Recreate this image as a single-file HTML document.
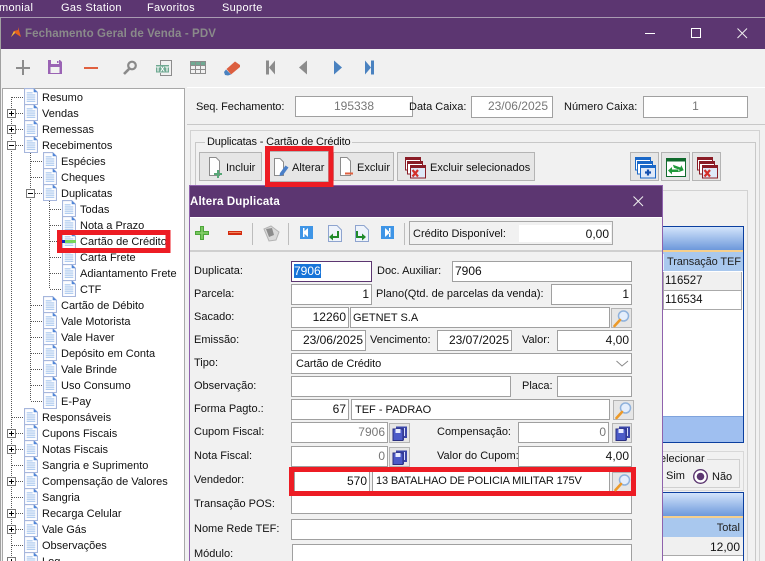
<!DOCTYPE html>
<html><head><meta charset="utf-8"><title>Fechamento Geral de Venda</title>
<style>
html,body{margin:0;padding:0;width:765px;height:561px;overflow:hidden;background:#f1f1f1}
body{position:relative;font-family:"Liberation Sans",sans-serif;font-size:11px;color:#111}
.a{position:absolute;box-sizing:border-box}
.t{position:absolute;white-space:nowrap;line-height:14px;height:14px;margin-top:1px}
.f{position:absolute;box-sizing:border-box;background:#fff;border:1px solid #a0a0a0;white-space:nowrap;line-height:20px;padding:0 4px;overflow:hidden;font-size:11px}
.n{font-size:12px;line-height:18px}
.r{text-align:right}.g{color:#777}
.b{position:absolute;box-sizing:border-box;background:#e6e6e6;border:1px solid #b4b4b4}
.w{color:#fff}
svg{position:absolute;left:0;top:0;overflow:hidden}
</style></head><body>

<!-- frame backgrounds -->
<div class="a" style="left:0;top:0;width:765px;height:17px;background:#5c3671"></div>
<div class="a" style="left:0;top:17px;width:765px;height:1px;background:#a99bb2"></div>
<div class="a" style="left:0;top:18px;width:765px;height:31px;background:#5c3671"></div>
<div class="a" style="left:0;top:18px;width:1px;height:543px;background:#a0a0a0"></div>
<div class="t w" style="left:-1px;top:0;letter-spacing:.3px">monial</div>
<div class="t w" style="left:61px;top:0;letter-spacing:.3px">Gas Station</div>
<div class="t w" style="left:147px;top:0;letter-spacing:.3px">Favoritos</div>
<div class="t w" style="left:222px;top:0;letter-spacing:.3px">Suporte</div>
<div class="t" style="left:25px;top:26px;font-weight:bold;color:#8a8a8a;font-size:11.5px;letter-spacing:.1px">Fechamento Geral de Venda - PDV</div>

<!-- tree panel -->
<div class="a" style="left:2px;top:88px;width:183px;height:473px;background:#fff;border:1px solid #a8a8a8;border-bottom:0"></div>

<!-- right top panel -->
<div class="a" style="left:187px;top:87px;width:578px;height:38px;background:#f1f1f1;border-top:1px solid #fff;border-bottom:1px solid #c8c8c8"></div>
<div class="t" style="left:196px;top:99px;letter-spacing:-.1px">Seq. Fechamento:</div>
<div class="f g n" style="left:295px;top:96px;width:118px;height:21px;text-align:center">195338</div>
<div class="t" style="left:409px;top:99px">Data Caixa:</div>
<div class="f g r n" style="left:471px;top:96px;width:82px;height:22px">23/06/2025</div>
<div class="t" style="left:564px;top:99px">Número Caixa:</div>
<div class="f g n" style="left:643px;top:96px;width:105px;height:22px;text-align:center">1</div>

<!-- frames -->
<div class="a" style="left:190px;top:130px;width:570px;height:431px;border:1px solid #d2d2d2;border-bottom:0"></div>
<div class="a" style="left:195px;top:142px;width:561px;height:419px;border:1px solid #c8c8c8;border-bottom:0"></div>
<div class="a" style="left:198px;top:190px;width:550px;height:371px;border:1px solid #d2d2d2;border-bottom:0"></div>
<div class="t" style="left:205px;top:134px;background:#f1f1f1;padding:0 2px;letter-spacing:-.15px">Duplicatas - Cartão de Crédito</div>

<!-- buttons -->
<div class="b" style="left:199px;top:152px;width:63px;height:29px"></div>
<div class="b" style="left:269px;top:151px;width:60px;height:31px"></div>
<div class="b" style="left:333px;top:152px;width:61px;height:29px"></div>
<div class="b" style="left:397px;top:152px;width:138px;height:29px"></div>
<div class="b" style="left:630px;top:152px;width:29px;height:29px"></div>
<div class="b" style="left:661px;top:152px;width:29px;height:29px"></div>
<div class="b" style="left:692px;top:152px;width:29px;height:29px"></div>
<div class="t" style="left:226px;top:160px">Incluir</div>
<div class="t" style="left:292px;top:160px">Alterar</div>
<div class="t" style="left:357px;top:160px">Excluir</div>
<div class="t" style="left:430px;top:160px">Excluir selecionados</div>

<!-- background grid 1 -->
<div class="a" style="left:655px;top:226px;width:89px;height:24px;background:linear-gradient(#d3e4fb,#6d98db);border-top:1px solid #0b3f9f"></div>
<div class="a" style="left:655px;top:250px;width:89px;height:2px;background:#f6cf8c"></div>
<div class="a" style="left:655px;top:252px;width:89px;height:165px;background:#fff"></div>
<div class="a" style="left:655px;top:252px;width:89px;height:19px;background:#a9c8ee"></div>
<div class="a" style="left:663px;top:254px;width:1px;height:16px;background:#e8f0fb"></div>
<div class="t" style="left:667px;top:254px;color:#222;letter-spacing:-.1px">Transação TEF</div>
<div class="a" style="left:655px;top:272px;width:87px;height:19px;background:#f0f0f0;border-bottom:1px solid #aaa;border-right:1px solid #aaa"></div>
<div class="a" style="left:655px;top:291px;width:87px;height:19px;background:#fff;border-bottom:1px solid #aaa;border-right:1px solid #aaa"></div>
<div class="a" style="left:663px;top:272px;width:1px;height:38px;background:#aaa"></div>
<div class="t" style="left:665px;top:273px;font-size:11.500px">116527</div>
<div class="t" style="left:665px;top:292px;font-size:11.500px">116534</div>
<div class="a" style="left:655px;top:416px;width:89px;height:27px;background:#9fbff0;border-top:1px solid #7fa3dc;border-bottom:1px solid #0b3f9f"></div>
<div class="a" style="left:743px;top:226px;width:1px;height:217px;background:#0b3f9f"></div>
<!-- selecionar -->
<div class="a" style="left:650px;top:451px;width:94px;height:40px;border:1px solid #d8d8d8"></div>
<div class="a" style="left:650px;top:459px;width:90px;height:29px;border:1px solid #d0d0d0"></div>
<div class="t" style="left:660px;top:451px;background:#f1f1f1;padding-right:2px">elecionar</div>
<div class="t" style="left:666px;top:468px">Sim</div>
<div class="t" style="left:712px;top:469px">Não</div>
<!-- background grid 2 -->
<div class="a" style="left:655px;top:492px;width:89px;height:24px;background:linear-gradient(#d3e4fb,#6d98db);border-top:1px solid #0b3f9f"></div>
<div class="a" style="left:655px;top:516px;width:89px;height:2px;background:#f6cf8c"></div>
<div class="a" style="left:655px;top:518px;width:88px;height:19px;background:#a9c8ee"></div>
<div class="t r" style="right:25px;top:520px;color:#222">Total</div>
<div class="a" style="left:655px;top:537px;width:88px;height:19px;background:#f0f0f0;border-bottom:1px solid #aaa"></div>
<div class="a" style="left:655px;top:556px;width:88px;height:5px;background:#fff"></div>
<div class="t r" style="right:25px;top:539px;font-size:12px">12,00</div>
<div class="a" style="left:743px;top:492px;width:1px;height:69px;background:#0b3f9f"></div>

<!-- dialog -->
<div class="a" style="left:189px;top:185px;width:474px;height:376px;background:#f1f1f1;border:1px solid #8f62ad;border-bottom:0"></div>
<div class="a" style="left:190px;top:186px;width:472px;height:31px;background:#5c3671"></div>
<div class="t w" style="left:190px;top:194px;font-weight:bold;font-size:11.500px;letter-spacing:.15px">Altera Duplicata</div>
<div class="a" style="left:190px;top:217px;width:472px;height:1px;background:#fff"></div>
<div class="a" style="left:190px;top:250px;width:472px;height:2px;background:#cfcfcf"></div>
<div class="a" style="left:409px;top:221px;width:204px;height:24px;background:#f1f1f1;border:1px solid #a8a8a8"></div>
<div class="a" style="left:519px;top:225px;width:92px;height:17px;background:#fff"></div>
<div class="t" style="left:413px;top:226px">Crédito Disponível:</div>
<div class="t" style="right:156px;top:226px;font-size:12px">0,00</div>

<div class="t" style="left:194px;top:263px">Duplicata:</div>
<div class="f n" style="left:291px;top:261px;width:81px;height:21px;border-color:#5c3671;padding:0 2px"><span style="background:#1874d8;color:#fff;display:inline-block;line-height:14px;margin-top:2px">7906</span></div>
<div class="t" style="left:377px;top:263px">Doc. Auxiliar:</div>
<div class="f n" style="left:452px;top:261px;width:180px;height:21px;padding-left:2px">7906</div>

<div class="t" style="left:194px;top:286px">Parcela:</div>
<div class="f r n" style="left:291px;top:284px;width:81px;height:21px;padding-right:2px">1</div>
<div class="t" style="left:376px;top:286px">Plano(Qtd. de parcelas da venda):</div>
<div class="f r n" style="left:551px;top:284px;width:81px;height:21px;padding-right:2px">1</div>

<div class="t" style="left:194px;top:309px">Sacado:</div>
<div class="f r n" style="left:291px;top:307px;width:58px;height:21px;padding-right:2px">12260</div>
<div class="f" style="left:350px;top:307px;width:260px;height:21px;padding-left:2px">GETNET S.A</div>
<div class="b" style="left:611px;top:308px;width:21px;height:20px"></div>

<div class="t" style="left:194px;top:332px">Emissão:</div>
<div class="f r n" style="left:291px;top:330px;width:75px;height:21px;padding:0 2px">23/06/2025</div>
<div class="t" style="left:370px;top:332px">Vencimento:</div>
<div class="f r n" style="left:437px;top:330px;width:75px;height:21px;padding:0 2px">23/07/2025</div>
<div class="t" style="left:522px;top:332px">Valor:</div>
<div class="f r n" style="left:557px;top:330px;width:75px;height:21px;padding:0 2px">4,00</div>

<div class="t" style="left:194px;top:355px">Tipo:</div>
<div class="f" style="left:291px;top:353px;width:341px;height:21px;letter-spacing:-.1px">Cartão de Crédito</div>

<div class="t" style="left:194px;top:378px">Observação:</div>
<div class="f" style="left:291px;top:376px;width:220px;height:21px"></div>
<div class="t" style="left:522px;top:378px">Placa:</div>
<div class="f" style="left:557px;top:376px;width:75px;height:21px"></div>

<div class="t" style="left:194px;top:401px">Forma Pagto.:</div>
<div class="f r n" style="left:291px;top:399px;width:58px;height:21px;padding-right:2px">67</div>
<div class="f" style="left:351px;top:399px;width:259px;height:21px;padding-left:3px">TEF - PADRAO</div>
<div class="b" style="left:613px;top:400px;width:21px;height:20px"></div>

<div class="t" style="left:194px;top:424px">Cupom Fiscal:</div>
<div class="f r g n" style="left:291px;top:422px;width:97px;height:21px;padding:0 2px">7906</div>
<div class="b" style="left:389px;top:423px;width:21px;height:20px"></div>
<div class="t" style="left:437px;top:424px">Compensação:</div>
<div class="f r g n" style="left:518px;top:422px;width:91px;height:21px;padding:0 2px">0</div>
<div class="b" style="left:612px;top:423px;width:20px;height:20px"></div>

<div class="t" style="left:194px;top:448px">Nota Fiscal:</div>
<div class="f r g n" style="left:291px;top:446px;width:97px;height:21px;padding:0 2px">0</div>
<div class="b" style="left:389px;top:447px;width:21px;height:20px"></div>
<div class="t" style="left:437px;top:448px">Valor do Cupom:</div>
<div class="f r n" style="left:518px;top:446px;width:114px;height:21px;padding:0 2px">4,00</div>

<div class="t" style="left:194px;top:472px">Vendedor:</div>
<div class="f r n" style="left:294px;top:471px;width:76px;height:21px;padding:0 2px">570</div>
<div class="f" style="left:372px;top:471px;width:238px;height:21px;padding-left:3px;letter-spacing:-.15px;line-height:18px">13 BATALHAO DE POLICIA MILITAR 175V</div>
<div class="b" style="left:612px;top:472px;width:20px;height:20px"></div>

<div class="t" style="left:194px;top:496px">Transação POS:</div>
<div class="f" style="left:291px;top:495px;width:341px;height:19px"></div>
<div class="t" style="left:194px;top:521px">Nome Rede TEF:</div>
<div class="f" style="left:291px;top:519px;width:341px;height:21px"></div>
<div class="t" style="left:194px;top:546px">Módulo:</div>
<div class="f" style="left:292px;top:544px;width:340px;height:21px"></div>

<!-- tree text -->
<div class="a" style="left:79px;top:233px;width:86px;height:16px;background:#fff"></div>
<div class="t" style="left:42px;top:90px">Resumo</div>
<div class="t" style="left:42px;top:106px">Vendas</div>
<div class="t" style="left:42px;top:122px">Remessas</div>
<div class="t" style="left:42px;top:138px">Recebimentos</div>
<div class="t" style="left:61px;top:154px">Espécies</div>
<div class="t" style="left:61px;top:170px">Cheques</div>
<div class="t" style="left:61px;top:186px">Duplicatas</div>
<div class="t" style="left:80px;top:202px">Todas</div>
<div class="t" style="left:80px;top:218px">Nota a Prazo</div>
<div class="t" style="left:80px;top:234px">Cartão de Crédito</div>
<div class="t" style="left:80px;top:250px">Carta Frete</div>
<div class="t" style="left:80px;top:266px">Adiantamento Frete</div>
<div class="t" style="left:80px;top:282px">CTF</div>
<div class="t" style="left:61px;top:298px">Cartão de Débito</div>
<div class="t" style="left:61px;top:314px">Vale Motorista</div>
<div class="t" style="left:61px;top:330px">Vale Haver</div>
<div class="t" style="left:61px;top:346px">Depósito em Conta</div>
<div class="t" style="left:61px;top:362px">Vale Brinde</div>
<div class="t" style="left:61px;top:378px">Uso Consumo</div>
<div class="t" style="left:61px;top:394px">E-Pay</div>
<div class="t" style="left:42px;top:410px">Responsáveis</div>
<div class="t" style="left:42px;top:426px">Cupons Fiscais</div>
<div class="t" style="left:42px;top:442px">Notas Fiscais</div>
<div class="t" style="left:42px;top:458px">Sangria e Suprimento</div>
<div class="t" style="left:42px;top:474px">Compensação de Valores</div>
<div class="t" style="left:42px;top:490px">Sangria</div>
<div class="t" style="left:42px;top:506px">Recarga Celular</div>
<div class="t" style="left:42px;top:522px">Vale Gás</div>
<div class="t" style="left:42px;top:538px">Observações</div>
<div class="t" style="left:42px;top:554px">Log</div>

<!-- vector overlay -->
<svg width="765" height="561" viewBox="0 0 765 561" xmlns="http://www.w3.org/2000/svg">
<defs>
<symbol id="d" viewBox="0 0 13 16" width="14" height="17" preserveAspectRatio="none">
<path d="M.5.5H9L12.500 4V15.500H.5Z" fill="#fdfdff" stroke="#a6b6dc"/>
<path d="M9 .5V4H12.500Z" fill="#4f86d8"/>
<path d="M2.500 4.500H8M2.500 6.500H10.500M2.500 8.500H10.500M2.500 10.500H10.500M2.500 12.500H10.500" stroke="#a6c6ee" fill="none"/>
</symbol>
<symbol id="s" viewBox="0 0 21 20" width="21" height="20">
<circle cx="12.500" cy="8" r="5" fill="#e4eefc" stroke="#8fb2dc" stroke-width="1.500"/>
<path d="M9 12L3.500 18" stroke="#ec9a2a" stroke-width="2.600" stroke-linecap="round"/>
</symbol>
<symbol id="v" viewBox="0 0 21 20" width="21" height="20">
<path d="M7 3.500H18V15H15V17H7Z" fill="#3a46a8"/>
<path d="M4 6H14V17.500H4Z" fill="#4c5bc8" stroke="#2a2f80"/>
<path d="M6.500 6H11.500V10H6.500Z" fill="#e8ecff"/>
<path d="M15.500 5V13" stroke="#d6dcff"/>
</symbol>
<symbol id="rx" viewBox="0 0 22 24" width="22" height="24">
<path d="M.5.5H15.500V13H.5Z" fill="#fff" stroke="#8a1c26"/><path d="M.5.5H15.500V3H.5Z" fill="#8a1c26"/>
<path d="M2.500 4.500H17.500V17H2.500Z" fill="#fff" stroke="#8a1c26"/><path d="M2.500 4.500H17.500V7H2.500Z" fill="#8a1c26"/>
<path d="M5.500 8.500H20.500V21H5.500Z" fill="#dfe9f8" stroke="#8a1c26"/><path d="M5.500 8.500H20.500V11H5.500Z" fill="#8a1c26"/>
<path d="M7.500 13L13 19.500M13 13L7.500 19.500" stroke="#d4302a" stroke-width="2.200"/>
</symbol>
</defs>

<!-- logo -->
<path d="M18 27L21 37L15 33L11 37L14 31L18 30Z" fill="#e8641e"/><path d="M15 33L11 37L14 31Z" fill="#f2c040"/>
<!-- window controls -->
<path d="M645 33.500H655" stroke="#fff"/><rect x="691.500" y="28.500" width="9" height="9" fill="none" stroke="#fff"/>
<path d="M737.500 28.500L747 38M747 28.500L737.500 38" stroke="#eee" fill="none"/>
<!-- main toolbar -->
<path d="M23 60V75M16 68H30" stroke="#8c8c8c" stroke-width="2" fill="none"/>
<path d="M48 60H60L62 62V74H48Z" fill="#9a63b4"/><rect x="51" y="60" width="8" height="4" fill="#f1f1f1"/><rect x="57" y="61" width="1.500" height="2" fill="#9a63b4"/><rect x="50.500" y="67" width="9" height="6" fill="#f1f1f1"/>
<path d="M84 68H98" stroke="#e0603f" stroke-width="2"/>
<circle cx="132" cy="65.500" r="3.800" fill="none" stroke="#8a8a8a" stroke-width="2.200"/><path d="M129 69L124 74" stroke="#8a8a8a" stroke-width="2.600"/>
<path d="M160.500 65V60.500H171.500V75.500H160.500V73" fill="none" stroke="#8c8c8c"/><rect x="156" y="65" width="13" height="7.500" fill="#6fa992"/>
<text x="162.500" y="71.500" font-family="Liberation Mono" font-size="7.500" font-weight="bold" fill="#fff" text-anchor="middle">TXT</text>
<rect x="190.500" y="61.500" width="15" height="12" fill="none" stroke="#8c8c8c"/><rect x="191" y="62" width="14" height="3.500" fill="#6fa992"/><path d="M195.500 62V73M200.500 62V73M191 65.500H205M191 69.500H205" stroke="#8c8c8c" fill="none"/>
<path d="M226.500 69L235 61.500L240 65V67L231 74.500Z" fill="#dc5f40"/><path d="M224 72L226 69.500L231 74.500L228 75.500L225 75Z" fill="#4a82c0"/>
<path d="M266 60.500H269V74.500H266Z M275 60.500V74.500L269 67.500Z" fill="#8c8c8c"/>
<path d="M307 60.500V74.500L299 67.500Z" fill="#8c8c8c"/>
<path d="M334 60.500V74.500L342 67.500Z" fill="#4a82c0"/>
<path d="M365 60.500V74.500L371 67.500Z M371 60.500H374V74.500H371Z" fill="#4a82c0"/>

<!-- tree dotted lines -->
<g stroke="#555" stroke-dasharray="1 1" fill="none">
<path d="M11.500 97V561M30.500 145V401M49.500 193V289"/>
<path d="M12 97.500H25M16 113.500H25M16 129.500H25M16 145.500H25M31 161.500H44M31 177.500H44M35 193.500H44M50 209.500H63M50 225.500H63M50 241.500H63M50 257.500H63M50 273.500H63M50 289.500H63M31 305.500H44M31 321.500H44M31 337.500H44M31 353.500H44M31 369.500H44M31 385.500H44M31 401.500H44M12 417.500H25M16 433.500H25M16 449.500H25M12 465.500H25M16 481.500H25M12 497.500H25M16 513.500H25M16 529.500H25M12 545.500H25M16 561.500H25"/>
</g>
<!-- expanders -->
<g fill="#fff" stroke="#7a7a7a">
<rect x="7.500" y="109.500" width="8" height="8"/><rect x="7.500" y="125.500" width="8" height="8"/><rect x="7.500" y="141.500" width="8" height="8"/><rect x="26.500" y="189.500" width="8" height="8"/><rect x="7.500" y="429.500" width="8" height="8"/><rect x="7.500" y="445.500" width="8" height="8"/><rect x="7.500" y="477.500" width="8" height="8"/><rect x="7.500" y="509.500" width="8" height="8"/><rect x="7.500" y="525.500" width="8" height="8"/><rect x="7.500" y="557.500" width="8" height="8"/>
</g>
<g stroke="#000" fill="none">
<path d="M9 113.500H14M11.500 111V116M9 129.500H14M11.500 127V132M9 145.500H14M28 193.500H33M9 433.500H14M11.500 431V436M9 449.500H14M11.500 447V452M9 481.500H14M11.500 479V484M9 513.500H14M11.500 511V516M9 529.500H14M11.500 527V532M9 561.500H14M11.500 559V561"/>
</g>
<!-- tree icons -->
<g transform="translate(-1 -1)">
<use href="#d" x="25" y="89"/><use href="#d" x="25" y="105"/><use href="#d" x="25" y="121"/><use href="#d" x="25" y="137"/>
<use href="#d" x="44" y="153"/><use href="#d" x="44" y="169"/><use href="#d" x="44" y="185"/>
<use href="#d" x="63" y="201"/><use href="#d" x="63" y="217"/><use href="#d" x="63" y="249"/><use href="#d" x="63" y="265"/><use href="#d" x="63" y="281"/>
<use href="#d" x="44" y="297"/><use href="#d" x="44" y="313"/><use href="#d" x="44" y="329"/><use href="#d" x="44" y="345"/><use href="#d" x="44" y="361"/><use href="#d" x="44" y="377"/><use href="#d" x="44" y="393"/>
<use href="#d" x="25" y="409"/><use href="#d" x="25" y="425"/><use href="#d" x="25" y="441"/><use href="#d" x="25" y="457"/><use href="#d" x="25" y="473"/><use href="#d" x="25" y="489"/><use href="#d" x="25" y="505"/><use href="#d" x="25" y="521"/><use href="#d" x="25" y="537"/><use href="#d" x="25" y="553"/>
<use href="#d" x="63" y="233"/></g><rect x="62" y="240" width="14" height="3" fill="#76d65c"/><rect x="62" y="240" width="3" height="3" fill="#1520c0"/>

<!-- red highlights -->
<g fill="none" stroke="#ed1c24">
<rect x="59.500" y="232.500" width="108.500" height="18" stroke-width="5"/>
<rect x="267.500" y="148.500" width="63.500" height="36" stroke-width="5"/>
<rect x="291.500" y="469.500" width="342" height="24" stroke-width="5"/>
</g>

<!-- button icons -->
<path d="M209.500 157.500H216L219.500 161V175.500H209.500Z" fill="#fff" stroke="#8c8c8c"/><path d="M214 174H222M218 170V178" stroke="#58a878" stroke-width="2"/>
<path d="M274.500 158.500H280L283.500 162V175.500H274.500Z" fill="#fff" stroke="#8c8c8c"/><path d="M280 173L285.500 165.500L288.500 167.500L283 175L279.500 176Z" fill="#4a7fc8"/>
<path d="M340.500 157.500H347L350.500 161V175.500H340.500Z" fill="#fff" stroke="#8c8c8c"/><path d="M345 173.500H353" stroke="#e0603f" stroke-width="2"/>
<use href="#rx" x="405" y="157"/>
<use href="#rx" x="697" y="157"/>
<g transform="translate(635 157)"><path d="M.5.5H15.500V13H.5Z" fill="#fff" stroke="#1a68c8"/><path d="M.5.5H15.500V3H.5Z" fill="#1a68c8"/><path d="M2.500 4.500H17.500V17H2.500Z" fill="#fff" stroke="#1a68c8"/><path d="M2.500 4.500H17.500V7H2.500Z" fill="#1a68c8"/><path d="M5.500 8.500H20.500V21H5.500Z" fill="#dfe9f8" stroke="#1a68c8"/><path d="M5.500 8.500H20.500V11H5.500Z" fill="#1a68c8"/><path d="M10 15.500H16M13 12.500V18.500" stroke="#1450b0" stroke-width="2.200"/></g>
<g transform="translate(666 158)"><rect x=".5" y=".5" width="19" height="18" fill="#fff" stroke="#0f6a2c"/><rect x=".5" y=".5" width="19" height="3" fill="#0f6a2c"/><path d="M6 8H14V5.500L18 9.500L14 13V10.500H8" fill="#1f9a3a" transform="rotate(20 10 10)"/><path d="M13 14H6V16.500L2 12.500L6 9V11.500H12" fill="#1f9a3a"/></g>

<!-- dialog close -->
<path d="M633.500 196.500L643 206M643 196.500L633.500 206" stroke="#eee" fill="none"/>
<!-- dialog toolbar -->
<path d="M202 226V240M195 233H209" stroke="#4da63a" stroke-width="4"/>
<path d="M202 227V239M196 233H208" stroke="#86d06a" stroke-width="1.500"/>
<rect x="228" y="231" width="14" height="4" fill="#d42c10"/><rect x="229" y="232" width="12" height="1" fill="#f28a60"/>
<path d="M252.500 223V245M288.500 223V245M404.500 223V245" stroke="#bdbdbd"/>
<path d="M264 229L271 226L279 232L276 240L269 241Z" fill="#dadada" stroke="#b4b4b4"/><path d="M266 229L272 228L274 235L269 237Z" fill="#8c8c8c"/>
<rect x="300" y="226" width="13" height="13" fill="#3f95e6"/><path d="M308 228V237L303 232.500Z M303 228H304.500V237H303Z" fill="#fff"/>
<path d="M328.500 225.500H337L341.500 230V241.500H328.500Z" fill="#eef3fb" stroke="#8ea4cf"/><path d="M337 231V236H333V233.500L329 237L333 240.500V238H339V231Z" fill="#1f8a2a"/>
<path d="M355.500 225.500H364L368.500 230V241.500H355.500Z" fill="#eef3fb" stroke="#8ea4cf"/><path d="M358 231V236H362V233.500L366 237L362 240.500V238H356V231Z" fill="#1f8a2a"/>
<rect x="381" y="226" width="13" height="13" fill="#3f95e6"/><path d="M385 228V237L390 232.500Z M389 228H390.500V237H389Z" fill="#fff"/>

<!-- field buttons -->
<use href="#s" x="611" y="308"/><use href="#s" x="613" y="400"/><use href="#s" x="612" y="472"/>
<use href="#v" x="389" y="423"/><use href="#v" x="389" y="447"/><use href="#v" x="612" y="423"/>
<path d="M616.500 361L622 366L628 361" fill="none" stroke="#8a8a8a"/>
<!-- radio -->
<circle cx="700.500" cy="476.500" r="6.800" fill="#fff" stroke="#5c3671" stroke-width="1.400"/><circle cx="700.500" cy="476.500" r="3.800" fill="#5c3671"/>
</svg>
</body></html>
